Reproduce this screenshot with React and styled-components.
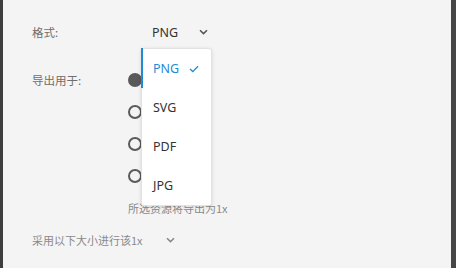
import React from "react";
import styled, { createGlobalStyle } from "styled-components";

const GlobalStyle = createGlobalStyle`
html, body {
    margin: 0;
    padding: 0;
    background: #f4f4f4;
}
`

const Frame = styled.div`
box-sizing: border-box;
height: 268px;
background: #f4f4f4;
border-left: 3px solid #3d3d3d;
border-right: 5px solid #464646;
padding: 16px 0 0 29px;
font-family: "Noto Sans", "Noto Sans CJK SC", sans-serif;
overflow: hidden;
`

const Row = styled.div`
display: flex;
align-items: flex-start;
min-height: 32px;
margin-bottom: ${props => props.gap || 0}px;
`

const Label = styled.div`
width: 96px;
height: 32px;
line-height: 32px;
font-size: 11.5px;
color: #6e6e6e;
font-family: "Noto Sans CJK SC", sans-serif;
`

const SelectWrap = styled.div`
position: relative;
margin-left: 13px;
`

const Trigger = styled.div`
box-sizing: border-box;
width: 71px;
height: 32px;
display: flex;
align-items: center;
justify-content: space-between;
padding: 0 4px 0 11px;
font-size: 12.5px;
color: #333;
`

const Menu = styled.div`
position: absolute;
top: 32px;
left: 0;
width: 71px;
box-sizing: border-box;
background: #fff;
border: 1px solid #e2e2e2;
border-radius: 3px;
box-shadow: 0 1px 4px rgba(0, 0, 0, 0.12);
z-index: 2;
`

const Item = styled.div`
position: relative;
height: 39px;
display: flex;
align-items: center;
justify-content: space-between;
padding: 0 12px 0 11px;
font-size: 12.5px;
color: ${props => props.active ? "#1f8ad6" : "#333"};

&::before {
    content: "";
    display: ${props => props.active ? "block" : "none"};
    position: absolute;
    left: -1px;
    top: -1px;
    bottom: 0;
    width: 2px;
    background: #1f8ad6;
}
`

const RadioGroup = styled.div`
display: flex;
flex-direction: column;
`

const RadioRow = styled.div`
height: 32px;
display: flex;
align-items: center;
`

const Radio = styled.span`
box-sizing: border-box;
width: 14px;
height: 14px;
border-radius: 50%;
border: 2px solid #5a5a5a;
background: ${props => props.checked ? "#5a5a5a" : "transparent"};
`

const Hint = styled.div`
height: 32px;
line-height: 32px;
margin-left: 96px;
font-size: 11px;
color: #8a8a8a;
font-family: "Noto Sans CJK SC", sans-serif;
`

const ScaleRow = styled.div`
display: flex;
align-items: center;
height: 32px;
gap: 23px;
font-size: 11px;
color: #8a8a8a;
font-family: "Noto Sans CJK SC", sans-serif;
`

const Chevron = ({ color = "#555" }) => (
    <svg width="9" height="6" viewBox="0 0 9 6">
        <path d="M1 1.2 L4.5 4.6 L8 1.2" fill="none" stroke={color} strokeWidth="1.5" />
    </svg>
)

const Check = () => (
    <svg width="10" height="8" viewBox="0 0 10 8">
        <path d="M1 4 L3.8 6.6 L9 1.2" fill="none" stroke="#1f8ad6" strokeWidth="1.3" />
    </svg>
)

const formats = ["PNG", "SVG", "PDF", "JPG"]

const App = () => {
    return (
        <Frame>
            <GlobalStyle />
            <Row gap={16}>
                <Label>格式:</Label>
                <SelectWrap>
                    <Trigger>
                        PNG
                        <Chevron />
                    </Trigger>
                    <Menu>
                        {formats.map((f, i) => (
                            <Item key={f} active={i === 0}>
                                {f}
                                {i === 0 && <Check />}
                            </Item>
                        ))}
                    </Menu>
                </SelectWrap>
            </Row>
            <Row>
                <Label>导出用于:</Label>
                <RadioGroup>
                    <RadioRow><Radio checked /></RadioRow>
                    <RadioRow><Radio /></RadioRow>
                    <RadioRow><Radio /></RadioRow>
                    <RadioRow><Radio /></RadioRow>
                </RadioGroup>
            </Row>
            <Hint>所选资源将导出为1x</Hint>
            <ScaleRow>
                采用以下大小进行该1x
                <Chevron color="#888" />
            </ScaleRow>
        </Frame>
    )
}

export default App;
